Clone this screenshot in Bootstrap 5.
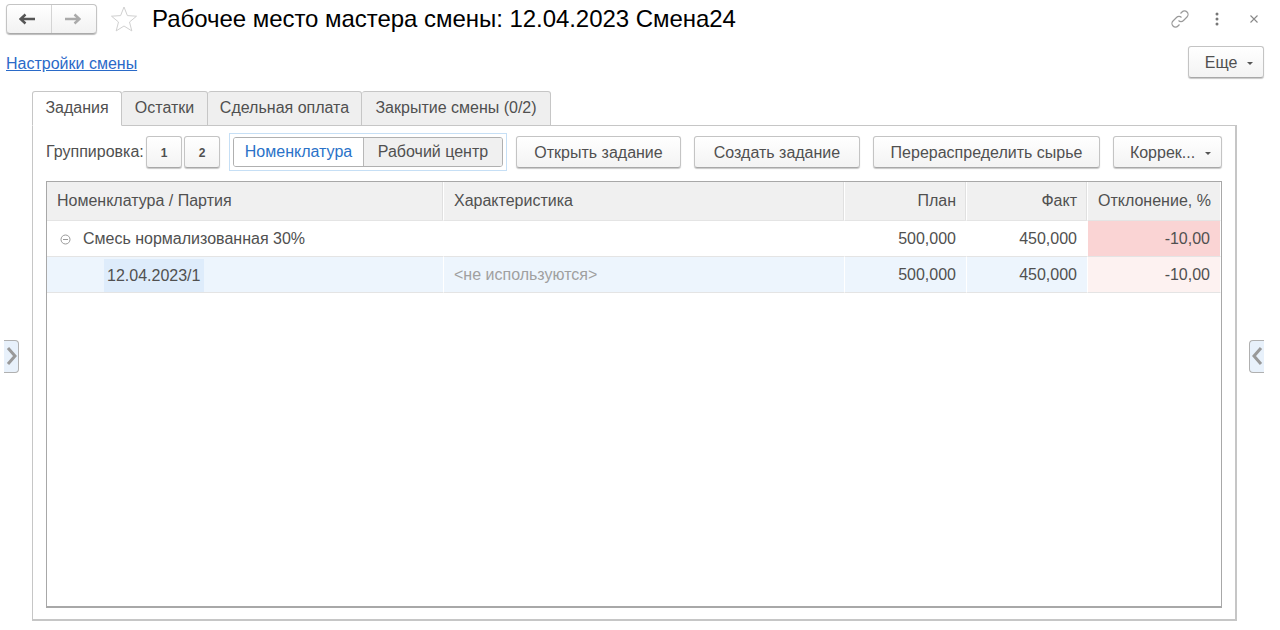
<!DOCTYPE html>
<html lang="ru">
<head>
<meta charset="utf-8">
<title>Рабочее место мастера смены</title>
<link href="https://cdn.jsdelivr.net/npm/bootstrap@5.3.0/dist/css/bootstrap.min.css" rel="stylesheet">
<style>
html,body{height:630px;overflow:hidden;background:#fff}
body{font-family:"Liberation Sans",Arial,sans-serif;font-size:16px;letter-spacing:0;color:#505050;padding:4px 16px 0 6px}
.ws-top{height:29px}
.ws-nav{width:91px;height:30px;border:1px solid #c4c4c4;border-bottom-color:#aaa;border-radius:4px;background:linear-gradient(#fff,#f2f2f2);box-shadow:0 1px 1px #bbb}
.ws-nav>div{flex:1;height:100%;padding-right:3px}
.ws-nav>div:first-child{border-right:1px solid #d4d4d4}
.ws-star{margin-left:13px;margin-right:14px}
.ws-title{font-size:24px;color:#000;line-height:29px;letter-spacing:-.04px}
.ws-chain{margin-right:24px}
.ws-kebab{margin-right:30px}
.ws-close{margin-right:5px}
.ws-linkrow{height:32px;margin-top:13px}
.ws-link{color:#2a6ac8;text-decoration:underline;margin-top:4px}
.ws-btn{height:32px;border:1px solid #c4c4c4;border-bottom-color:#a8a8a8;border-radius:3px;background:linear-gradient(#fff,#f3f3f3);box-shadow:0 1px 1px #c8c8c8;color:#505050;font-size:16px;padding:1px 0 0}
.ws-caret{display:inline-block;width:0;height:0;border-left:3.5px solid transparent;border-right:3.5px solid transparent;border-top:3.5px solid #555;margin-left:10px;vertical-align:middle}
.ws-w-more{width:76px;padding-left:6px}
.ws-w-open{width:165px;margin-right:13px}
.ws-w-new{width:166px;margin-right:13px}
.ws-w-redo{width:227px;margin-right:13px}
.ws-w-corr{width:109px;padding-left:6px}
.ws-main{margin-top:13px;margin-left:-6px;height:530px;width:1280px}
.ws-gutter{flex:none;display:flex;align-items:center}
.ws-g-left{width:32px;padding-left:4px}
.ws-g-right{width:43px;padding-left:12px}
.ws-handle{width:15px;height:33px;background:#e8f1fb;border:1px solid #b0b0b0}
.ws-handle-l{border-left:0;border-radius:0 4px 4px 0}
.ws-handle-r{border-right:0;border-radius:4px 0 0 4px}
.ws-center{width:1205px}
.ws-tabs{height:35px;position:relative;z-index:1;margin-bottom:-1px}
.ws-tab{height:35px;border:1px solid #c6c6c6;border-left-width:0;background:#efefef;border-radius:3px 3px 0 0;display:flex;align-items:center;justify-content:center;padding-bottom:1px}
.ws-tab.on{background:#fff;border-left-width:1px;border-bottom-color:#fff}
.ws-t1{width:90px}.ws-t2{width:86px}.ws-t3{width:154px}.ws-t4{width:189px}
.ws-panel{height:496px;border:1px solid #c6c6c6;border-bottom-width:2px;border-right-width:2px;padding:10px 13px 0 13px}
.ws-tool{height:32px;margin-bottom:13px}
.ws-lbl{width:100px;flex:none;white-space:nowrap}
.ws-num{width:36px;font-weight:700;font-size:12px;margin-right:2px}
.ws-switch{margin:0 9px 0 7px;height:38px;width:278px;flex:none;border:1px solid #c6dff5;padding:3px}
.ws-sw{height:30px;border:1px solid #b0b0b0;border-radius:3px;overflow:hidden}
.ws-sw>div{display:flex;align-items:center;justify-content:center;white-space:nowrap}
.ws-sw .a{width:130px;color:#2a72c8;background:#fff;border-right:1px solid #b8b8b8}
.ws-sw .b{flex:1;background:#f0f0f0}
.ws-gridwrap{height:427px;border:1px solid #a8a8a8;border-bottom-width:2px}
.ws-grid{table-layout:fixed;width:100%;margin:0;border-collapse:separate;border-spacing:0}
.ws-c1{width:397px}.ws-c2{width:401px}.ws-c3{width:122px}.ws-c4{width:121px}
.ws-grid th,.ws-grid td{padding:1px 10px 0;vertical-align:middle;font-weight:400;color:#505050;white-space:nowrap;box-shadow:none;border:0;border-bottom:1px solid #e4e4e4;border-right:1px solid #fff}
.ws-grid thead th{height:39px;padding:0 10px 1px;background:#f0f0f0;border-bottom:1px solid #e4e4e4;border-right:1px solid #fff;box-shadow:inset -1px 0 0 #e0e0e0}
.ws-grid thead th:last-child{box-shadow:none}
.ws-grid tbody td{height:36px;background:#fff}
.ws-grid tbody tr.sel td{background:#edf5fd}
.ws-grid tbody td.bad{background:#fad4d4}
.ws-grid tbody tr.sel td.soft{background:#fdf2f1}
.ws-grid .muted{color:#a0a0a0}
.ws-grid td.ws-groupcell{padding-left:13px}
.ws-tog{display:inline-block;margin-right:12px;vertical-align:-1px}
.ws-grid td.ws-datecell{padding:0 10px 0 57px}
.ws-date{display:inline-block;background:#deecfb;height:33px;line-height:33px;padding:0 4px 0 3px;margin-top:1px}
</style>
</head>
<body>
<div class="ws-top d-flex align-items-center">
  <div class="ws-nav d-flex">
    <div class="d-flex align-items-center justify-content-center">
      <svg width="17" height="12" viewBox="0 0 17 12"><path d="M1 6h15M6.500 1.500L1.500 6l5 4.500" fill="none" stroke="#555" stroke-width="2.500"/></svg>
    </div>
    <div class="d-flex align-items-center justify-content-center">
      <svg width="17" height="12" viewBox="0 0 17 12"><path d="M1 6h15M10.500 1.500L15.500 6l-5 4.500" fill="none" stroke="#aaa" stroke-width="2.500"/></svg>
    </div>
  </div>
  <svg class="ws-star" width="28" height="28" viewBox="0 0 28 28"><path d="M14 2l3.400 8.600 9.100.6-7 5.800 2.300 8.900L14 21l-7.800 4.900 2.300-8.900-7-5.800 9.100-.6z" fill="#fff" stroke="#d0d0d0" stroke-width="1"/></svg>
  <div class="ws-title">Рабочее место мастера смены: 12.04.2023 Смена24</div>
  <div class="ms-auto d-flex align-items-center">
    <svg class="ws-chain" width="22" height="22" viewBox="0 0 22 22" fill="none" stroke="#999" stroke-width="1.200"><path d="M9.500 12.500a3.500 3.500 0 0 0 5 0l3.500-3.500a3.500 3.500 0 0 0-5-5l-1.500 1.500"/><path d="M12.500 9.500a3.500 3.500 0 0 0-5 0L4 13a3.500 3.500 0 0 0 5 5l1.500-1.500"/></svg>
    <svg class="ws-kebab" width="4" height="14" viewBox="0 0 4 14" fill="#777"><circle cx="2" cy="2" r="1.500"/><circle cx="2" cy="7" r="1.500"/><circle cx="2" cy="12" r="1.500"/></svg>
    <svg class="ws-close" width="10" height="10" viewBox="0 0 10 10" stroke="#888" stroke-width="1.100"><path d="M1.500 1.500l7 7M8.500 1.500l-7 7"/></svg>
  </div>
</div>
<div class="ws-linkrow d-flex align-items-center justify-content-between">
  <a class="ws-link" href="#">Настройки смены</a>
  <button class="ws-btn ws-w-more" type="button">Еще<span class="ws-caret"></span></button>
</div>
<div class="ws-main d-flex">
  <div class="ws-gutter ws-g-left"><div class="ws-handle ws-handle-l d-flex align-items-center justify-content-center"><svg width="11" height="20" viewBox="0 0 11 20"><path d="M2 2l7 8-7 8" fill="none" stroke="#999" stroke-width="3"/></svg></div></div>
  <div class="ws-center">
    <div class="ws-tabs d-flex">
      <div class="ws-tab ws-t1 on">Задания</div>
      <div class="ws-tab ws-t2">Остатки</div>
      <div class="ws-tab ws-t3">Сдельная оплата</div>
      <div class="ws-tab ws-t4">Закрытие смены (0/2)</div>
    </div>
    <div class="ws-panel">
      <div class="ws-tool d-flex align-items-center">
        <div class="ws-lbl">Группировка:</div>
        <button class="ws-btn ws-num" type="button">1</button>
        <button class="ws-btn ws-num" type="button">2</button>
        <div class="ws-switch"><div class="ws-sw d-flex h-100"><div class="a">Номенклатура</div><div class="b">Рабочий центр</div></div></div>
        <button class="ws-btn ws-w-open" type="button">Открыть задание</button>
        <button class="ws-btn ws-w-new" type="button">Создать задание</button>
        <button class="ws-btn ws-w-redo" type="button">Перераспределить сырье</button>
        <button class="ws-btn ws-w-corr" type="button">Коррек...<span class="ws-caret"></span></button>
      </div>
      <div class="ws-gridwrap">
        <table class="table ws-grid">
          <colgroup><col class="ws-c1"><col class="ws-c2"><col class="ws-c3"><col class="ws-c4"><col></colgroup>
          <thead><tr><th>Номенклатура / Партия</th><th>Характеристика</th><th class="text-end">План</th><th class="text-end">Факт</th><th class="text-end">Отклонение, %</th></tr></thead>
          <tbody>
            <tr><td class="ws-groupcell"><svg class="ws-tog" width="11" height="11" viewBox="0 0 11 11" fill="none" stroke="#999"><circle cx="5.500" cy="5.500" r="4.500"/><path d="M3 5.500h5"/></svg><span>Смесь нормализованная 30%</span></td><td></td><td class="text-end">500,000</td><td class="text-end">450,000</td><td class="text-end bad">-10,00</td></tr>
            <tr class="sel"><td class="ws-datecell"><span class="ws-date">12.04.2023/1</span></td><td class="muted">&lt;не используются&gt;</td><td class="text-end">500,000</td><td class="text-end">450,000</td><td class="text-end soft">-10,00</td></tr>
          </tbody>
        </table>
      </div>
    </div>
  </div>
  <div class="ws-gutter ws-g-right"><div class="ws-handle ws-handle-r d-flex align-items-center justify-content-center"><svg width="11" height="20" viewBox="0 0 11 20"><path d="M9 2l-7 8 7 8" fill="none" stroke="#999" stroke-width="3"/></svg></div></div>
</div>
<script src="https://cdn.jsdelivr.net/npm/bootstrap@5.3.0/dist/js/bootstrap.bundle.min.js"></script>
</body>
</html>
